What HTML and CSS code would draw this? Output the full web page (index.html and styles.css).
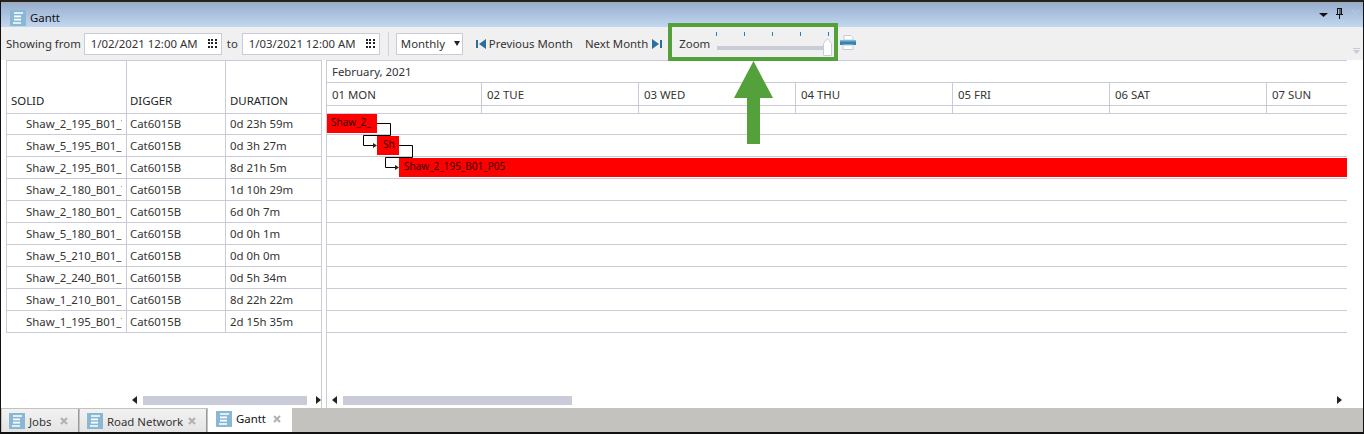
FILE: index.html
```html
<!DOCTYPE html>
<html lang="en">
<head>
<meta charset="utf-8">
<title>Gantt</title>
<link rel="stylesheet" href="styles.css">
</head>
<body>
<div class="window">
  <header class="titlebar">
    <svg class="doc-icon" viewBox="0 0 16 16"><rect width="16" height="16" fill="#8ab8d4"/><path d="M4 3h9M4 6.300h7M4 9.600h7M3 13h8" stroke="#fff" stroke-width="1.700"/></svg>
    <span class="title">Gantt</span>
    <div class="window-controls">
      <svg class="wc-menu" viewBox="0 0 9 5"><path d="M0 1h9L4.500 5z" fill="#111"/></svg>
      <svg class="wc-pin" viewBox="0 0 9 11"><path d="M2 .5h5M2.500 1v5M6.500 1v5M1 6.500h7M4.500 7v4M5 1v5" stroke="#111" fill="none"/></svg>
      <svg class="wc-close" viewBox="0 0 9 9"><path d="M1 1l7 7M8 1L1 8" stroke="#b4c6d8" stroke-width="1.400"/></svg>
    </div>
  </header>

  <div class="toolbar">
    <span class="lbl">Showing from</span>
    <div class="date-box"><span>1/02/2021 12:00 AM</span><i class="grid-icon"></i></div>
    <span class="lbl to">to</span>
    <div class="date-box"><span>1/03/2021 12:00 AM</span><i class="grid-icon"></i></div>
    <div class="sep"></div>
    <div class="select"><span>Monthly</span><i class="caret"></i></div>
    <svg class="nav-icon prev" viewBox="0 0 10 10"><rect y="1" width="2" height="8" fill="#2b6f9e"/><path d="M10 0v10L3 5z" fill="#2b6f9e"/></svg>
    <span class="lbl nav">Previous Month</span>
    <span class="lbl nav next">Next Month</span>
    <svg class="nav-icon nexti" viewBox="0 0 10 10"><path d="M0 0v10l7-5z" fill="#2b6f9e"/><rect x="8" y="1" width="2" height="8" fill="#2b6f9e"/></svg>
    <span class="lbl zoom-lbl">Zoom</span>
    <div class="slider">
      <div class="ticks"><i></i><i></i><i></i><i></i><i></i></div>
      <div class="track"></div>
      <svg class="thumb" width="9" height="18" viewBox="0 0 9 18"><path d="M4.500 .5L8.500 5.500V17.500H.5V5.500z" fill="#fff" stroke="#c9cbd8"/></svg>
    </div>
    <svg class="printer" viewBox="0 0 16 15"><path d="M4 .5h7l2 2V5H4z" fill="#fff" stroke="#c4ccd4"/><rect y="5" width="16" height="5" fill="#2f83b5"/><rect y="5" width="16" height="1.500" fill="#7fb6d8"/><rect x="3" y="10" width="10" height="4.500" fill="#fff" stroke="#c4ccd4"/></svg>
    <svg class="overflow" viewBox="0 0 7 6"><path d="M0 .5h7" stroke="#c8ccd4"/><path d="M0 2h7L3.500 6z" fill="#c8ccd4"/></svg>
  </div>

  <main class="content">
    <section class="left">
      <div class="table">
        <div class="row head"><div>SOLID</div><div>DIGGER</div><div>DURATION</div></div>
        <div class="row"><div class="solid"><span>Shaw_2_195_B01_T</span></div><div>Cat6015B</div><div>0d 23h 59m</div></div>
        <div class="row"><div class="solid"><span>Shaw_5_195_B01_L</span></div><div>Cat6015B</div><div>0d 3h 27m</div></div>
        <div class="row"><div class="solid"><span>Shaw_2_195_B01_L</span></div><div>Cat6015B</div><div>8d 21h 5m</div></div>
        <div class="row"><div class="solid"><span>Shaw_2_180_B01_T</span></div><div>Cat6015B</div><div>1d 10h 29m</div></div>
        <div class="row"><div class="solid"><span>Shaw_2_180_B01_L</span></div><div>Cat6015B</div><div>6d 0h 7m</div></div>
        <div class="row"><div class="solid"><span>Shaw_5_180_B01_L</span></div><div>Cat6015B</div><div>0d 0h 1m</div></div>
        <div class="row"><div class="solid"><span>Shaw_5_210_B01_L</span></div><div>Cat6015B</div><div>0d 0h 0m</div></div>
        <div class="row"><div class="solid"><span>Shaw_2_240_B01_L</span></div><div>Cat6015B</div><div>0d 5h 34m</div></div>
        <div class="row"><div class="solid"><span>Shaw_1_210_B01_L</span></div><div>Cat6015B</div><div>8d 22h 22m</div></div>
        <div class="row"><div class="solid"><span>Shaw_1_195_B01_T</span></div><div>Cat6015B</div><div>2d 15h 35m</div></div>
      </div>
      <div class="hscroll left-scroll">
        <i class="arrow-l"></i><div class="scroll-track"><div class="scroll-thumb"></div></div><i class="arrow-r"></i>
      </div>
    </section>

    <section class="right">
      <div class="month">February, 2021</div>
      <div class="days">
        <div>01 MON</div><div>02 TUE</div><div>03 WED</div><div>04 THU</div><div>05 FRI</div><div>06 SAT</div><div>07 SUN</div>
      </div>
      <div class="subdays"><i></i><i></i><i></i><i></i><i></i><i></i><i></i></div>
      <div class="chart">
        <div class="chart-row"></div><div class="chart-row"></div><div class="chart-row"></div><div class="chart-row"></div><div class="chart-row"></div>
        <div class="chart-row"></div><div class="chart-row"></div><div class="chart-row"></div><div class="chart-row"></div><div class="chart-row"></div>
        <div class="bar b1">Shaw_2_</div>
        <div class="bar b2">Sh</div>
        <div class="bar b3">Shaw_2_195_B01_P05</div>
        <svg class="links" width="120" height="70" viewBox="0 0 120 70">
          <path d="M50 9.500H63.500V21.500H36.500V31.500H46M72 31.500H85.500V43.500H58.500V53.500H68" fill="none" stroke="#000"/>
          <path d="M46 29l4 2.500-4 2.500zM68 51l4 2.500-4 2.500z" fill="#222"/>
        </svg>
      </div>
      <div class="hscroll right-scroll">
        <i class="arrow-l"></i><div class="scroll-track"><div class="scroll-thumb"></div></div><i class="arrow-r"></i>
      </div>
    </section>
  </main>

  <footer class="tabs">
    <div class="tab"><svg class="doc-icon" viewBox="0 0 16 16"><rect width="16" height="16" fill="#8ab8d4"/><path d="M4 3h9M4 6.300h7M4 9.600h7M3 13h8" stroke="#fff" stroke-width="1.700"/></svg><span>Jobs</span><svg class="tab-x" viewBox="0 0 8 8"><path d="M1 1l6 6M7 1L1 7" stroke="#b0b0b0" stroke-width="2"/></svg></div>
    <div class="tab"><svg class="doc-icon" viewBox="0 0 16 16"><rect width="16" height="16" fill="#8ab8d4"/><path d="M4 3h9M4 6.300h7M4 9.600h7M3 13h8" stroke="#fff" stroke-width="1.700"/></svg><span>Road Network</span><svg class="tab-x" viewBox="0 0 8 8"><path d="M1 1l6 6M7 1L1 7" stroke="#b0b0b0" stroke-width="2"/></svg></div>
    <div class="tab active"><svg class="doc-icon" viewBox="0 0 16 16"><rect width="16" height="16" fill="#8ab8d4"/><path d="M4 3h9M4 6.300h7M4 9.600h7M3 13h8" stroke="#fff" stroke-width="1.700"/></svg><span>Gantt</span><svg class="tab-x" viewBox="0 0 8 8"><path d="M1 1l6 6M7 1L1 7" stroke="#b0b0b0" stroke-width="2"/></svg></div>
  </footer>

  <div class="callout-box"></div>
  <svg class="callout-arrow" width="39" height="83" viewBox="0 0 39 83"><path d="M19.500 0L39 37H26V83H13V37H0z" fill="#54a03a"/></svg>
</div>
</body>
</html>
```
FILE: styles.css
```css
* { box-sizing: border-box; }
html, body { margin: 0; padding: 0; height: 100%; overflow: hidden; }
body { background: #fff; font-family: "Noto Sans", "Open Sans", sans-serif; font-size: 11.400px; color: #222; }

.window {
  position: relative;
  width: 1364px;
  height: 434px;
  display: flex;
  flex-direction: column;
  border-top: 2px solid #222;
  border-left: 1px solid #111;
  border-right: 1px solid #111;
  border-bottom: 2px solid #111;
}

.titlebar {
  height: 25px;
  display: flex;
  align-items: flex-start;
  padding-left: 9px;
  background: linear-gradient(#a6a8ac 0, #9ab2d2 3px, #c3d7ef 100%);
  flex: none;
}
.doc-icon { width: 16px; height: 16px; flex: none; }
.titlebar .doc-icon { margin-top: 8px; }
.title { margin-top: 8px; margin-left: 4px; line-height: 16px; color: #111; }
.window-controls { margin-left: auto; margin-top: 6px; display: flex; align-items: center; gap: 7px; padding-right: 3px; }
.wc-menu { width: 9px; height: 5px; margin-top: 2px; }
.wc-pin { width: 9px; height: 11px; }
.wc-close { width: 9px; height: 9px; }

.toolbar {
  position: relative;
  height: 33px;
  flex: none;
  display: flex;
  align-items: center;
  padding-left: 5px;
  background: #f0f0f0;
}
.lbl { color: #333; white-space: nowrap; }
.date-box {
  width: 138px;
  height: 22px;
  margin-left: 3px;
  padding: 0 4px 0 6px;
  display: flex;
  align-items: center;
  justify-content: space-between;
  background: #fff;
  border: 1px solid #c9cbd8;
  color: #333;
  white-space: nowrap;
}
.to { margin-left: 5px; }
.to + .date-box { margin-left: 4px; }
.grid-icon {
  width: 9px;
  height: 9px;
  flex: none;
  background: repeating-linear-gradient(90deg, #222 0 2px, transparent 2px 3.500px);
  -webkit-mask: repeating-linear-gradient(#000 0 2px, transparent 2px 3.500px);
  mask: repeating-linear-gradient(#000 0 2px, transparent 2px 3.500px);
}
.sep { width: 1px; height: 24px; margin-left: 8px; background: #d0d2da; flex: none; }
.select {
  width: 67px;
  height: 22px;
  margin-left: 7px;
  padding: 0 1px 0 4px;
  display: flex;
  align-items: center;
  justify-content: space-between;
  background: #fff;
  border: 1px solid #c9cbd8;
  color: #333;
}
.caret { border-left: 3.500px solid transparent; border-right: 3.500px solid transparent; border-top: 5px solid #222; margin-right: 1px; }
.nav-icon { width: 10px; height: 10px; flex: none; }
.prev { margin-left: 13px; }
.nav { margin-left: 3px; }
.nav.next { margin-left: 12px; }
.nexti { margin-left: 4px; }
.zoom-lbl { margin-left: 17px; }
.slider { position: relative; width: 115px; height: 24px; margin-left: 7px; flex: none; align-self: flex-start; margin-top: 5px; }
.ticks { position: absolute; left: -1px; right: 3px; top: 0; display: flex; justify-content: space-between; }
.ticks i { width: 1px; height: 4px; background: #2b7fae; }
.track { position: absolute; left: 0; right: 7px; top: 14px; height: 4px; background: #c9cbd8; }
.thumb { position: absolute; right: 0; top: 6px; }
.printer { width: 16px; height: 15px; margin-left: 8px; margin-top: -2px; flex: none; }
.overflow { position: absolute; right: 3px; top: 21px; width: 7px; height: 6px; }

.content { flex: 1; min-height: 0; display: flex; background: #fff; padding-left: 5px; }
.left {
  width: 316px;
  flex: none;
  display: flex;
  flex-direction: column;
  border-right: 1px solid #c9cbd8;
}
.table { flex: 1; border-top: 1px solid #c9cbd8; }
.row {
  display: grid;
  grid-template-columns: 120px 99px 96px;
  height: 22px;
  border-bottom: 1px solid #c9cbd8;
  border-left: 1px solid #c9cbd8;
}
.row > div {
  padding-left: 3px;
  line-height: 22px;
  border-right: 1px solid #c9cbd8;
  white-space: nowrap;
  color: #333;
}
.row > div:last-child { border-right: 0; padding-left: 4px; }
.row.head { height: 53px; }
.row.head > div { padding-top: 30px; line-height: 20px; color: #222; }
.row.head > div:first-child { padding-left: 4px; }
.row.head + .row { height: 21px; }
.row.head + .row > div { line-height: 20px; }
.row > .solid { padding-left: 19px; }
.solid span { display: block; width: 96px; overflow: hidden; }

.hscroll { height: 14px; margin-bottom: 1px; flex: none; display: flex; align-items: center; }
.left-scroll { padding-left: 126px; }
.right-scroll { padding-left: 5px; padding-right: 5px; }
.scroll-track { flex: 1; height: 9px; margin: 0 6px; }
.scroll-thumb { height: 100%; background: #c9cbd8; }
.left-scroll .scroll-thumb { width: 164px; }
.right-scroll .scroll-thumb { width: 229px; }
.arrow-l, .arrow-r { width: 0; height: 0; border-top: 4.500px solid transparent; border-bottom: 4.500px solid transparent; flex: none; }
.arrow-l { border-right: 5px solid #222; }
.arrow-r { border-left: 5px solid #222; }

.right {
  width: 1021px;
  margin-left: 4px;
  flex: none;
  display: flex;
  flex-direction: column;
  border-left: 1px solid #c9cbd8;
}
.month {
  height: 23px;
  line-height: 21px;
  padding-left: 5px;
  border-top: 1px solid #c9cbd8;
  border-bottom: 1px solid #c9cbd8;
  color: #333;
  flex: none;
}
.days {
  height: 23px;
  flex: none;
  display: grid;
  grid-template-columns: 155px repeat(6, 157px);
  border-bottom: 1px solid #c9cbd8;
}
.days > div { padding-left: 5px; padding-top: 2px; line-height: 20px; border-right: 1px solid #c9cbd8; color: #333; white-space: nowrap; }
.subdays {
  height: 8px;
  flex: none;
  display: grid;
  grid-template-columns: 155px repeat(6, 157px);
  border-bottom: 1px solid #c9cbd8;
}
.subdays i { border-right: 1px solid #c9cbd8; }
.chart { position: relative; flex: 1; min-height: 0; }
.chart-row { height: 22px; border-bottom: 1px solid #c9cbd8; }
.chart-row:first-child { height: 21px; }
.bar {
  position: absolute;
  height: 19px;
  background: #f00;
  color: #3a0000;
  font-size: 10px;
  line-height: 17px;
  padding-left: 5px;
  white-space: nowrap;
  overflow: hidden;
}
.b1 { left: 0; top: 0; width: 50px; padding-left: 4px; }
.b2 { left: 50px; top: 22px; width: 22px; padding-left: 6px; }
.b3 { left: 72px; top: 44px; right: 0; }
.links { position: absolute; left: 0; top: 0; pointer-events: none; }

.tabs {
  height: 24px;
  flex: none;
  display: flex;
  align-items: stretch;
  padding-left: 1px;
  gap: 1px;
  background: #c4c2bf;
}
.tab {
  display: flex;
  align-items: center;
  padding: 1px 10px 0 7px;
  margin-top: 1px;
  background: linear-gradient(#f2f2f2, #e4e4e4);
  border-right: 1px solid #9a9a9a;
  color: #333;
}
.tab:first-child { width: 77px; }
.tab:nth-child(2) { width: 127px; }
.tab span { margin-left: 4px; }
.tab .tab-x { width: 8px; height: 8px; margin-left: auto; }
.tab.active { width: 84px; margin-top: 0; padding: 0 11px 3px 8px; background: #fff; border-right: 0; color: #111; }

.callout-box {
  position: absolute;
  left: 667px;
  top: 21px;
  width: 170px;
  height: 38px;
  border: 4px solid #54a03a;
}
.callout-arrow { position: absolute; left: 733px; top: 59px; }
```
